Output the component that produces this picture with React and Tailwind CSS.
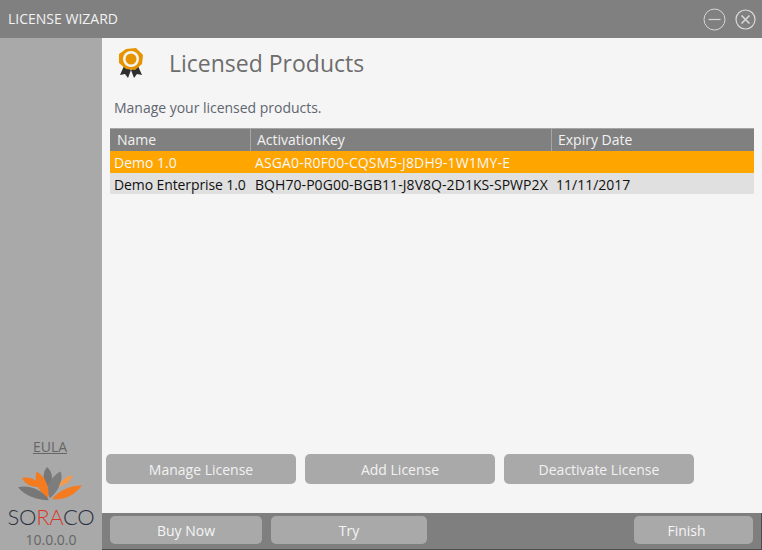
import React from "react";

const font = "font-['Open_Sans','Noto_Sans',sans-serif]";

function Medal() {
  return (
    <svg width="30" height="32" viewBox="0 0 30 32">
      <path d="M8 19 L4 28 L9 27 L12 31 L15 23 Z" fill="#2f2f2f" />
      <path d="M22 19 L26 28 L21 27 L18 31 L15 23 Z" fill="#2f2f2f" />
      <path d="M10 2 L20 1 L27 8 L26 17 L19 23 L10 22 L3 16 L3 7 Z" fill="#e59400" />
      <circle cx="15" cy="12" r="8" fill="#f5f5f5" />
      <circle cx="15" cy="12" r="5.5" fill="#e59400" />
    </svg>
  );
}

function Lotus() {
  return (
    <svg width="66" height="35" viewBox="0 0 68 38" preserveAspectRatio="none">
      <path d="M30 0 C36 6 37 14 31 22 C25 15 25 6 30 0 Z" fill="#777777" />
      <path d="M44 5 C47 14 42 26 33 34 C27 24 33 11 44 5 Z" fill="#7d7d7d" />
      <path d="M19 5 C28 10 33 22 31 34 C22 28 16 16 19 5 Z" fill="#f47b20" />
      <path d="M4 12 C12 10 20 14 25 21 C16 23 8 20 4 12 Z" fill="#f47b20" />
      <path d="M56 9 C55 15 49 20 42 21 C44 15 50 10 56 9 Z" fill="#f59a4a" />
      <path d="M0 22 C12 19 25 25 32 36 C19 36 7 31 0 22 Z" fill="#777777" />
      <path d="M66 20 C58 31 47 36 35 35 C42 25 54 20 66 20 Z" fill="#f47b20" />
    </svg>
  );
}

function SideButton({ label }) {
  return (
    <button className="h-[30px] w-[190px] rounded-[5px] bg-[#a9a9a9] text-[14px] text-[#f2f2f2]">
      {label}
    </button>
  );
}

function BarButton({ label, width }) {
  return (
    <button className={`${width} h-[28px] rounded-[5px] bg-[#a9a9a9] text-[14px] text-[#f5f5f5]`}>
      {label}
    </button>
  );
}

export default function App() {
  return (
    <div className={`${font} flex h-[550px] w-[762px] flex-col overflow-hidden bg-[#f5f5f5]`}>
      {/* Title bar */}
      <div className="flex h-[38px] items-center justify-between bg-[#808080] pl-[8px] pr-[6px]">
        <span className="text-[14px] leading-[20px] text-[#f2f2f2]">LICENSE WIZARD</span>
        <div className="flex items-center gap-[9px]">
          <svg width="23" height="23" viewBox="0 0 23 23" fill="none" stroke="#d6d6d6">
            <circle cx="11.5" cy="11.5" r="10.5" />
            <path d="M5.5 11.5 H17.5" strokeWidth="1.2" />
          </svg>
          <svg width="21" height="21" viewBox="0 0 21 21" fill="none" stroke="#d9d9d9">
            <circle cx="10.5" cy="10.5" r="9.5" strokeWidth="1.2" />
            <path d="M6.5 6.5 L14.5 14.5 M14.5 6.5 L6.5 14.5" strokeWidth="1.6" />
          </svg>
        </div>
      </div>

      <div className="flex flex-1">
        {/* Sidebar */}
        <div className="flex w-[102px] flex-col items-center justify-end bg-[#a9a9a9]">
          <a className="mr-[2px] text-[14px] leading-[20px] text-[#666666] underline">EULA</a>
          <div className="mt-[10px]">
            <Lotus />
          </div>
          <div className="mt-[2px] font-['Lato',sans-serif] text-[22px] font-light leading-[26px] tracking-[-0.3px] text-[#2a3140]">
            SO<span className="text-[#d9372a]">RA</span>CO
          </div>
          <div className="text-[14px] leading-[20px] text-[#666666]">10.0.0.0</div>
        </div>

        {/* Main */}
        <div className="flex flex-1 flex-col">
          <div className="flex flex-1 flex-col">
            <div className="flex h-[50px] items-center pl-[14px]">
              <Medal />
              <h1 className="ml-[23px] text-[23px] text-[#6d6d6d]">Licensed Products</h1>
            </div>
            <p className="ml-[12px] mt-[10px] text-[14px] leading-[20px] tracking-[-0.02px] text-[#5f6670]">
              Manage your licensed products.
            </p>
            <div className="ml-[8px] mt-[10px] w-[644px] text-[14px]">
              <div className="flex h-[23px] items-center border-t border-[#a6a6a6] bg-[#808080] text-[#f2f2f2]">
                <div className="h-full w-[141px] border-r border-[#a6a6a6] pl-[7px] leading-[22px]">Name</div>
                <div className="h-full w-[301px] border-r border-[#a6a6a6] pl-[6px] leading-[22px]">ActivationKey</div>
                <div className="h-full flex-1 pl-[6px] leading-[22px]">Expiry Date</div>
              </div>
              <div className="flex h-[22px] items-center bg-[#ffa500] text-[#f7f7f7]">
                <div className="w-[141px] pl-[4px]">Demo 1.0</div>
                <div className="w-[301px] pl-[4px] tracking-[0.12px]">ASGA0-R0F00-CQSM5-J8DH9-1W1MY-E</div>
              </div>
              <div className="flex h-[21px] items-center whitespace-nowrap bg-[#e0e0e0] pt-[2px] text-[#111111]">
                <div className="w-[141px] pl-[4px] tracking-[-0.1px]">Demo Enterprise 1.0</div>
                <div className="w-[301px] pl-[4px] tracking-[0.06px]">BQH70-P0G00-BGB11-J8V8Q-2D1KS-SPWP2X</div>
                <div className="pl-[4px]">11/11/2017</div>
              </div>
            </div>
            <div className="mb-[29px] ml-[4px] mt-auto flex gap-[9px]">
              <SideButton label="Manage License" />
              <SideButton label="Add License" />
              <SideButton label="Deactivate License" />
            </div>
          </div>

          {/* Bottom bar */}
          <div className="flex h-[37px] items-start border-b border-r border-[#4d4d4d] bg-[#7f7f7f] pl-[8px] pr-[8px] pt-[3px]">
            <BarButton label="Buy Now" width="w-[152px]" />
            <BarButton label="Try" width="ml-[9px] w-[156px]" />
            <BarButton label="Finish" width="ml-auto w-[119px] pr-[14px]" />
          </div>
        </div>
      </div>
    </div>
  );
}
